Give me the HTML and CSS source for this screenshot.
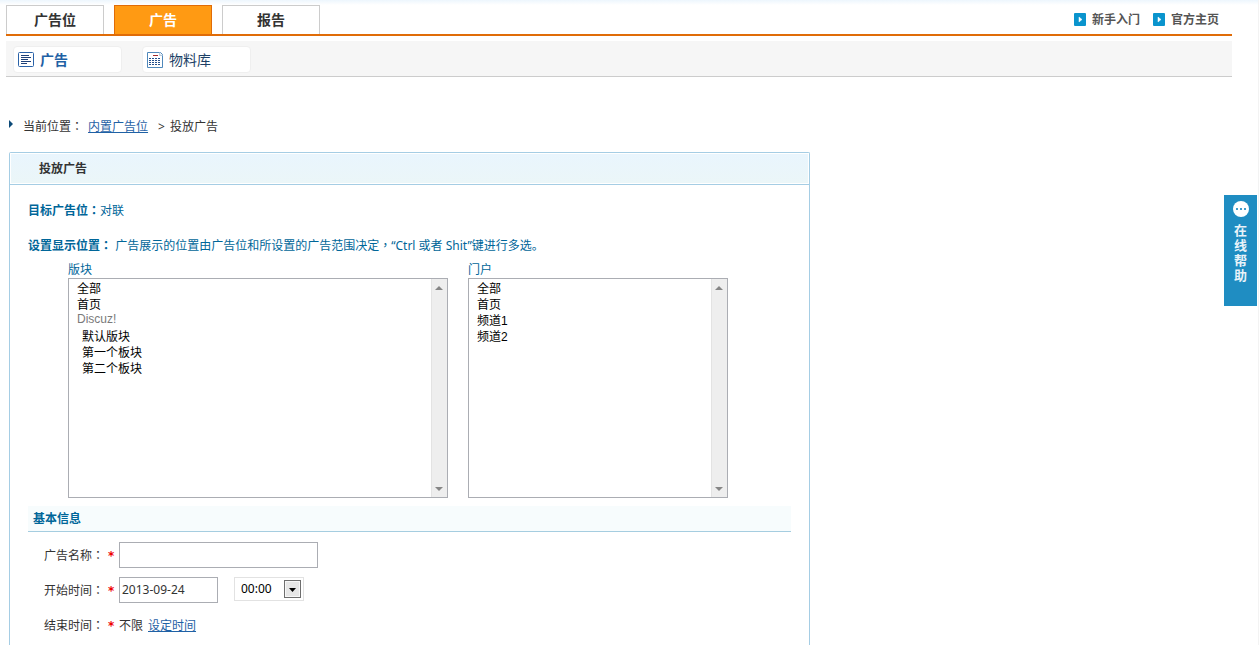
FILE: index.html
```html
<!DOCTYPE html>
<html lang="zh-CN">
<head>
  <meta charset="UTF-8" />
  <meta name="viewport" content="width=device-width, initial-scale=1.0"/>
  <title>投放广告</title>
  <link rel="stylesheet" href="styles.css">
</head>
<body>
  <!-- Top navigation -->
  <header class="header">
    <nav class="tabs">
      <a class="tab" href="#">广告位</a>
      <a class="tab active" href="#">广告</a>
      <a class="tab" href="#">报告</a>
    </nav>
    <div class="top-links">
      <a href="#">
        <svg width="12" height="13" viewBox="0 0 12 13"><rect width="12" height="13" rx="1" fill="#0a94cd"/><path d="M5 4l3 2.500-3 2.500z" fill="#fff" stroke="#fff" stroke-width=".5"/></svg>
        新手入门
      </a>
      <a href="#">
        <svg width="12" height="13" viewBox="0 0 12 13"><rect width="12" height="13" rx="1" fill="#0a94cd"/><path d="M5 4l3 2.500-3 2.500z" fill="#fff" stroke="#fff" stroke-width=".5"/></svg>
        官方主页
      </a>
    </div>
  </header>

  <nav class="subnav">
    <a class="subnav-item active" href="#">
      <svg width="16" height="16" viewBox="0 0 16 16">
        <rect x=".5" y=".5" width="15" height="14" rx="1" fill="#fff" stroke="#2a62a8"/>
        <path d="M3 3.500h8M3 5.500h10M3 7.500h7M3 9.500h10M3 11.500h6" stroke="#1d4079"/>
      </svg>
      广告
    </a>
    <a class="subnav-item" href="#">
      <svg width="16" height="16" viewBox="0 0 16 16">
        <path d="M.5.5h13l2 2v13H.5z" fill="#fff" stroke="#4f88bb"/>
        <path d="M12.500.5v3h3" fill="#dfe8f1" stroke="#b9cde0"/>
        <path d="M6 3.500h5" stroke="#a3282c"/>
        <path d="M2 6.500h12M2 8.500h12M2 10.500h12M2 12.500h12" stroke="#24508c" stroke-dasharray="2 1"/>
      </svg>
      物料库
    </a>
  </nav>

  <div class="breadcrumb">
    <svg width="4" height="8" viewBox="0 0 4 8"><path d="M0 0l4 4-4 4z" fill="#0c4a78"/></svg>
    <span>当前位置<span class="punct">：</span></span>
    <a href="#">内置广告位</a>
    <span class="sep">&gt;</span>
    <span>投放广告</span>
  </div>

  <!-- Ad form -->
  <form class="panel">
    <h1 class="panel-title">投放广告</h1>
    <div class="panel-body">
      <p class="info"><strong>目标广告位<span class="punct">：</span></strong>对联</p>
      <p class="info"><strong>设置显示位置<span class="punct">：</span></strong> <span>广告展示的位置由广告位和所设置的广告范围决定<span class="punct">，</span>“Ctrl 或者 Shit”键进行多选。</span></p>

      <div class="lists">
        <div class="list list-forum">
          <label for="forum">版块</label>
          <div class="listbox">
            <select id="forum" multiple size="13">
              <option>全部</option>
              <option>首页</option>
              <option disabled>Discuz!</option>
              <option class="child">默认版块</option>
              <option class="child">第一个板块</option>
              <option class="child">第二个板块</option>
            </select>
            <div class="scrollbar">
              <svg width="8" height="4" viewBox="0 0 8 4"><path d="M0 4l4-4 4 4z" fill="#868686"/></svg>
              <svg width="8" height="4" viewBox="0 0 8 4"><path d="M0 0h8l-4 4z" fill="#868686"/></svg>
            </div>
          </div>
        </div>
        <div class="list list-portal">
          <label for="portal">门户</label>
          <div class="listbox">
            <select id="portal" multiple size="13">
              <option>全部</option>
              <option>首页</option>
              <option>频道1</option>
              <option>频道2</option>
            </select>
            <div class="scrollbar">
              <svg width="8" height="4" viewBox="0 0 8 4"><path d="M0 4l4-4 4 4z" fill="#868686"/></svg>
              <svg width="8" height="4" viewBox="0 0 8 4"><path d="M0 0h8l-4 4z" fill="#868686"/></svg>
            </div>
          </div>
        </div>
      </div>

      <h2 class="section-title">基本信息</h2>

      <div class="row">
        <label class="row-label" for="adName">广告名称<span class="punct">：</span></label>
        <span class="required">*</span>
        <input class="text name" id="adName" type="text">
      </div>
      <div class="row">
        <label class="row-label" for="startDate">开始时间<span class="punct">：</span></label>
        <span class="required">*</span>
        <input class="text date" id="startDate" type="text" value="2013-09-24">
        <div class="time">
          <select id="startTime" aria-label="开始时间">
            <option>00:00</option>
            <option>12:00</option>
          </select>
          <svg class="time-arrow" width="17" height="18" viewBox="0 0 17 18">
            <rect x=".5" y=".5" width="16" height="17" fill="#e6e6e6" stroke="#6e6e6e"/>
            <rect x="1.500" y="1.500" width="14" height="15" fill="none" stroke="#f7f7f7"/>
            <path d="M5 8h7l-3.500 4z" fill="#000"/>
          </svg>
        </div>
      </div>
      <div class="row">
        <span class="row-label">结束时间<span class="punct">：</span></span>
        <span class="required">*</span>
        <span class="unlimited">不限</span>
        <a href="#">设定时间</a>
      </div>
    </div>
  </form>

  <!-- Floating help -->
  <a class="help" href="#">
    <svg width="16" height="16" viewBox="0 0 16 16">
      <circle cx="8" cy="8" r="8" fill="#fff"/>
      <path d="M3 7h2v2H3zM7 7h2v2H7zM11 7h2v2h-2z" fill="#3f9ccb"/>
    </svg>
    <span>在线帮助</span>
  </a>
</body>
</html>
```

FILE: styles.css
```css
* {
  box-sizing: border-box;
}

body {
  margin: 0;
  min-height: 100vh;
  display: flex;
  flex-direction: column;
  border-right: 1px solid #f3f3f3;
  background: #fff linear-gradient(#edf6fd, #fff) no-repeat 0 0 / 100% 5px;
  font-family: "Noto Sans", "Noto Sans CJK SC", sans-serif;
  font-size: 12px;
  line-height: 16px;
  color: #333;
}

a {
  color: #1f61a5;
}

svg {
  display: block;
  flex: none;
}

/* centred full-width punctuation */
.punct {
  font-family: "Noto Sans CJK TC", sans-serif;
  font-feature-settings: "locl" 0;
  -webkit-locale: "zh-TW";
  line-height: 1;
}

/* Top navigation */
.header {
  display: flex;
  justify-content: space-between;
  margin: 5px 26px 0 6px;
  border-bottom: 2px solid #e06c08;
}

.tabs {
  display: flex;
  gap: 10px;
}

.tab {
  width: 98px;
  height: 29px;
  border: 1px solid #ccc;
  border-bottom: 0;
  background: #fff;
  color: #333;
  font-size: 14px;
  font-weight: bold;
  line-height: 28px;
  text-align: center;
  text-decoration: none;
}

.tab.active {
  border-color: #e06c08;
  background: #ff9a13;
  color: #fff;
}

.top-links {
  display: flex;
  align-items: center;
  gap: 13px;
  padding-right: 13px;
}

.top-links a {
  display: flex;
  align-items: center;
  gap: 6px;
  color: #555;
  font-weight: bold;
  text-decoration: none;
}

.subnav {
  display: flex;
  gap: 20px;
  margin: 5px 26px 0 6px;
  padding: 5px 7px 3px;
  border-bottom: 1px solid #ccc;
  background: #f6f6f6;
}

.subnav-item {
  display: flex;
  align-items: center;
  gap: 6px;
  width: 109px;
  height: 27px;
  padding-left: 4px;
  border: 1px solid #efefef;
  border-radius: 4px;
  background: #fff;
  color: #1d3f66;
  font-size: 14px;
  text-decoration: none;
}

.subnav-item.active {
  color: #1f61a5;
  font-weight: bold;
}

.breadcrumb {
  display: flex;
  padding: 42px 9px 17px;
}

.breadcrumb svg {
  margin: 1px 10px 0 0;
}

.breadcrumb a {
  margin: 0 10px 0 5px;
}

.breadcrumb .sep {
  margin-right: 5px;
}

/* Ad form */
.panel {
  flex: 1;
  width: 100%;
  max-width: 801px;
  margin-left: 9px;
  border: 1px solid #a5cde4;
  border-bottom: 0;
  border-radius: 2px 2px 0 0;
}

.panel-title {
  margin: 0;
  padding: 7px 28px 7px;
  border: 1px solid #fff;
  background: linear-gradient(#e9f5fd, #ebf6f8);
  box-shadow: 0 1px #a5cde4;
  color: #333;
  font-size: 12px;
  line-height: 15px;
}

.panel-body {
  padding: 19px 18px 0;
}

.info {
  margin: 0 0 19px;
  color: #069;
}

.lists {
  display: flex;
  gap: 20px;
  margin: -11px 0 8px;
  padding-left: 40px;
}

.list label {
  display: block;
  color: #069;
}

.list-forum {
  width: 380px;
}

.list-portal {
  width: 260px;
}

.listbox {
  display: flex;
  height: 220px;
  border: 1px solid #abadb3;
}

.listbox select {
  flex: 1;
  min-width: 0;
  padding: 0;
  border: 0;
  border-radius: 0;
  outline: 0;
  background: #fff;
  color: #000;
  font-family: "Liberation Sans", "Noto Sans CJK SC", sans-serif;
  font-size: 12px;
  scrollbar-width: none;
}

.listbox option {
  height: 16px;
  min-height: 16px;
  padding: 0 8px;
}

.listbox option:disabled {
  padding-top: 1px;
  color: #7a7a7a;
}

.listbox option.child {
  padding-left: 13px;
}

.scrollbar {
  display: flex;
  flex-direction: column;
  justify-content: space-between;
  align-items: center;
  width: 16px;
  padding: 7px 1px 6px 0;
  border-left: 1px solid #e3e3e3;
  background: #eee;
}

.section-title {
  margin: 0 0 10px;
  padding: 5px 5px 4px;
  border-bottom: 1px solid #a5cde0;
  background: #f7fcfd;
  color: #069;
  font-size: 12px;
  line-height: 16px;
}

.row {
  display: flex;
  height: 26px;
  margin-bottom: 9px;
  padding-left: 16px;
  line-height: 28px;
}

.row-label {
  width: 64px;
}

.required {
  width: 11px;
  color: #e00;
  font-family: "DejaVu Sans", sans-serif;
  font-weight: bold;
}

.text {
  height: 26px;
  padding: 0 2px;
  border: 1px solid #abadb3;
  background: #fff;
  color: #333;
  font: inherit;
}

.text.name {
  width: 199px;
}

.text.date {
  width: 99px;
}

.time {
  position: relative;
  margin-left: 16px;
}

.time select {
  display: block;
  width: 70px;
  height: 24px;
  padding: 0 6px;
  border: 1px solid #e2e2e2;
  border-radius: 0;
  background: #fff;
  color: #000;
  font: inherit;
  line-height: 16px;
  appearance: none;
}

.time-arrow {
  position: absolute;
  top: 3px;
  right: 3px;
  pointer-events: none;
}

.unlimited {
  margin-right: 5px;
}

/* Floating help */
.help {
  position: fixed;
  top: 195px;
  right: 2px;
  display: flex;
  flex-direction: column;
  align-items: center;
  gap: 6px;
  width: 33px;
  height: 111px;
  padding-top: 6px;
  background: #1f8dc2;
  color: #e9f3f9;
  font-size: 13px;
  font-weight: bold;
  line-height: 15px;
  text-decoration: none;
}

.help span {
  width: 13px;
}
```
